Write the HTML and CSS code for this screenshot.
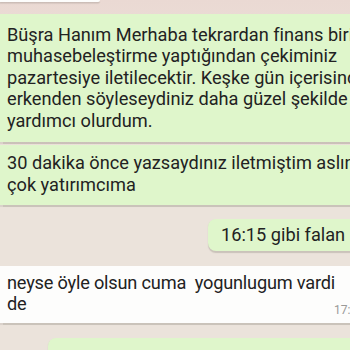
FILE: index.html
```html
<!DOCTYPE html>
<html lang="tr">
<head>
<meta charset="utf-8">
<link rel="stylesheet" href="styles.css">
</head>
<body>
<div class="chat">
  <div class="bubble in stub"></div>
  <div class="bubble out first">Büşra Hanım Merhaba tekrardan finans birimi muhasebeleştirme yaptığından çekiminiz pazartesiye iletilecektir. Keşke gün içerisinde erkenden söyleseydiniz daha güzel şekilde yardımcı olurdum.</div>
  <div class="bubble out second">30 dakika önce yazsaydınız iletmiştim aslında çok yatırımcıma</div>
  <div class="bubble out short">16:15 gibi falan</div>
  <div class="bubble in wide">
    <span class="msg">neyse öyle olsun cuma&nbsp; yogunlugum vardi<br>de</span>
    <span class="time">17:32</span>
  </div>
  <div class="bubble out last"></div>
</div>
</body>
</html>
```
FILE: styles.css
```css
html, body {
  margin: 0;
  padding: 0;
  width: 350px;
  height: 350px;
  overflow: hidden;
  background: #ebe3db;
}
.chat {
  display: flex;
  flex-direction: column;
  font-family: Roboto, "Noto Sans", sans-serif;
  font-size: 18.2px;
  line-height: 21.5px;
  color: #222;
  background: linear-gradient(#ead9d3 0, #ecdfd8 60px, #ebe3db 200px);
  height: 350px;
}
.bubble {
  box-sizing: border-box;
  box-shadow: 0 1.5px 1px rgba(120, 110, 100, 0.28);
}
.out { background: #dff6cb; }
.in { background: #fdfdfc; }
.stub {
  width: 100px;
  height: 5px;
  border-bottom-right-radius: 6px;
}
.first {
  margin-top: 12px;
  width: 380px;
  padding: 10px 0 11px 7px;
}
.second {
  margin-top: 3px;
  width: 380px;
  padding: 7px 0 10px 7px;
}
.short {
  margin-top: 14px;
  margin-left: 208px;
  width: 170px;
  border-radius: 8px 0 0 8px;
  padding: 5px 0 5px 13px;
}
.wide {
  margin-top: 15px;
  width: 380px;
  padding: 6px 0 8px 7px;
  display: flex;
  align-items: flex-end;
}
.msg {
  flex: none;
  white-space: nowrap;
  letter-spacing: -0.2px;
}
.time {
  flex: none;
  margin-left: -1px;
  margin-bottom: -2px;
  font-size: 12px;
  line-height: 14px;
  color: #9a9a98;
}
.last {
  margin-top: 15px;
  margin-left: 48px;
  width: 320px;
  height: 40px;
  border-radius: 8px 0 0 0;
}
```
